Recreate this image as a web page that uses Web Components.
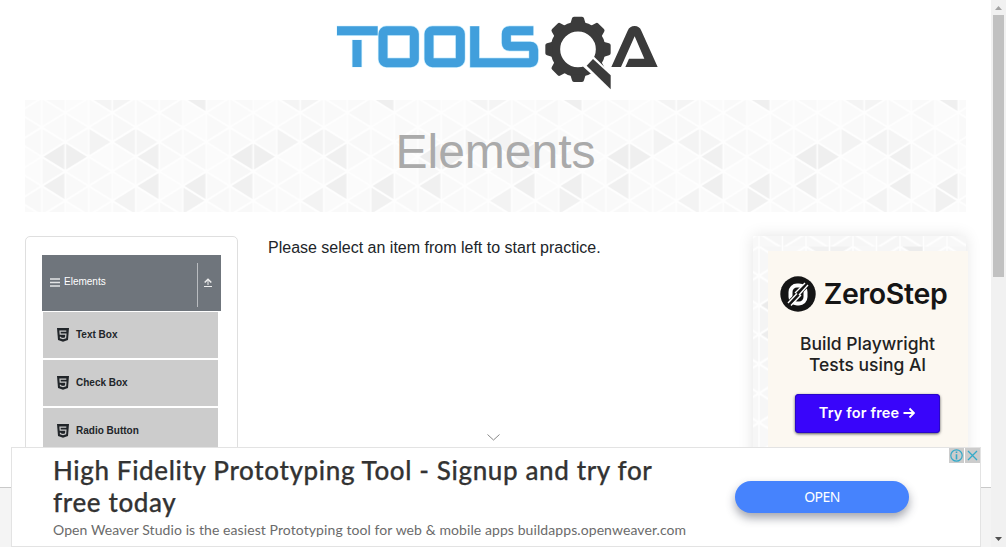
<!DOCTYPE html>
<html lang="en">
<head>
<meta charset="utf-8">
<title>Elements</title>
<style>
html,body{margin:0;height:547px;overflow:hidden;background:#fff}
body{font:16px/24px "Liberation Sans",Arial,sans-serif;color:#212529}
</style>
</head>
<body>
<demo-page></demo-page>
<script>
const define = (name, html, setup) => customElements.define(name, class extends HTMLElement {
  connectedCallback() {
    if (this.shadowRoot) return;
    const t = document.createElement('template');
    t.innerHTML = html;
    this.attachShadow({ mode: 'open' }).appendChild(t.content.cloneNode(true));
    if (setup) setup(this, this.shadowRoot);
  }
});

define('tri-pattern', `<style>:host{display:block;overflow:hidden}svg{display:block;width:100%;height:100%}</style>
<svg aria-hidden="true"><defs><pattern id="p" patternUnits="userSpaceOnUse" width="188" height="600"></pattern></defs><rect width="100%" height="100%" fill="url(#p)"/></svg>`,
(host, root) => {
  const p = root.querySelector('pattern');
  const dx = +host.getAttribute('dx') || 0, dy = +host.getAttribute('dy') || 0;
  const dim = +host.getAttribute('dim') || 0;
  p.setAttribute('patternTransform', `translate(${dx} ${dy})`);
  const w = 23.5, h = 29.35;
  const dark = { 'L0,0':238,'R1,0':239,'L4,0':240,'L0,1':240,'L4,1':239,'L6,1':239,'R6,1.5':241,'L3,1.5':243,
    'R2,-0.5':243,'L3,-0.5':243,'R4,-0.5':245,'L6,-2':239,'L2,-2':244,'R3,-2':244,'R0,0.5':247,'L5,-0.5':248 };
  const soft = [249,250,249,251,249,250,249,251,250,248,251];
  let s = '<rect width="188" height="600" fill="#fefefe"/>';
  for (let i = 0; i < 8; i++) for (let k = 0; k < 42; k++) {
    const y = (k / 2) * h, left = (i + k) % 2 === 0, x0 = i * w, x1 = x0 + w;
    const v = (dark[(left ? 'L' : 'R') + i + ',' + (k - 4) / 2] || soft[(i * 7 + k * 5 + (left ? 2 : 0)) % 11]) - dim;
    const pts = left ? `${x0+2},${y} ${x1-.8},${y-h/2+1.8} ${x1-.8},${y+h/2-1.8}` : `${x1-2},${y} ${x0+.8},${y-h/2+1.8} ${x0+.8},${y+h/2-1.8}`;
    s += `<polygon points="${pts}" fill="rgb(${v},${v},${v})"/>`;
  }
  p.innerHTML = s;
});

define('site-logo', `<style>:host{display:block;width:345px;height:95px}svg{display:block}</style>
<svg width="345" height="95" viewBox="0 0 1035 285" role="img" aria-label="ToolsQA">
<g fill="none" stroke="#ccefff" stroke-width="31"><path d="M35 77.500H159M96 104V187"/><rect x="174" y="77" width="94" height="96" rx="10"/><rect x="312" y="77" width="94" height="96" rx="10"/><path d="M449 63V173H616Q626 173 626 163V134Q626 124 616 124H554Q544 124 544 114V87Q544 77 554 77H626"/></g>
<g fill="none" stroke="#419fdc" stroke-width="27"><path d="M36 77.500H158M96 105V186"/><rect x="174" y="77" width="94" height="96" rx="10"/><rect x="312" y="77" width="94" height="96" rx="10"/><path d="M449 64V173H616Q626 173 626 163V134Q626 124 616 124H554Q544 124 544 114V87Q544 77 554 77H625"/></g>
<g id="gear" transform="translate(759 133)" fill="#3b3b3b"></g>
<path d="M781 184 805 160 857 211V253Z" fill="#fff" stroke="#fff" stroke-width="10"/>
<path d="M785 182 804 162 857 211V253Z" fill="#3b3b3b"/>
<path d="M859 186 908 77Q914 63 929 63 943 63 949 77L998 186H901L912 161H958L929 94 888 186Z" fill="#3b3b3b"/>
</svg>`, (h, r) => {
  let s = '<circle r="68" fill="none" stroke="#3b3b3b" stroke-width="29"/>';
  for (let i = 0; i < 8; i++) s += `<path transform="rotate(${i*45})" d="M-23-76-18-93Q-17-98-12-98H12Q17-98 18-93L23-76Z"/>`;
  r.querySelector('#gear').innerHTML = s;
});

define('page-banner', `<style>:host{display:grid;height:112px;overflow:hidden}tri-pattern,h1{grid-area:1/1}h1{margin:0;text-align:center;font-weight:400;font-size:48px;line-height:104px;color:#aaa;z-index:1}</style>
<tri-pattern dx="16.700" dy="-2"></tri-pattern><h1><slot></slot></h1>`);

define('menu-item', `<style>:host{display:flex;align-items:center;height:46px;margin-bottom:2px;background:#ccc;padding-left:14px;font-size:10px;font-weight:700;line-height:15px}svg{margin:0 7px 0 0}span{margin-bottom:1px}</style>
<svg width="12" height="14" viewBox="0 0 12 14"><path d="M0 0H12L11 12 6 13.700 1 12Z" fill="#212529"/><path d="M9.300 3.200H3L3.200 6.200H8.900L8.600 9.800 6 10.600 3.500 9.900 3.400 8.700" fill="none" stroke="#ccc" stroke-width="1.200"/></svg><span><slot></slot></span>`);

define('side-menu', `<style>:host{display:block;box-sizing:border-box;width:213px;height:320px;border:1px solid #dfdfdf;border-radius:5px;padding:18px 16px;background:#fff}
header{display:flex;align-items:center;height:56px;background:#6f757c;color:#fff;font-size:10px;line-height:15px;padding-left:8px;box-sizing:border-box}
header span{margin:-4px 0 0 4px;flex:1}.bars{margin-top:-2px}.up{width:23px;height:44px;border-left:1px solid #b9bcc0;display:flex;align-items:center;margin-top:4px}.up svg{margin:-5px 0 0 6px}
.items{width:175px;margin:1px 0 0 1px;color:#212529}</style>
<header><svg class="bars" width="10" height="9" viewBox="0 0 10 9"><path d="M0 1H10M0 4.500H10M0 8H10" stroke="#e4e5e6" stroke-width="1.700"/></svg><span><slot name="title"></slot></span><div class="up"><svg width="8" height="9" viewBox="0 0 8 9"><path d="M0 8.500H8M4 7V2" stroke="#eee" fill="none"/><path d="M.7 4.500 4 1.200 7.300 4.500" stroke="#eee" stroke-width="1.500" fill="none"/></svg></div></header>
<div class="items"><slot></slot></div>`);

define('zero-card', `<style>:host{display:block;position:relative;width:213px;height:300px;box-shadow:0 0 15px rgba(0,0,0,.11)}
tri-pattern{height:100%}
.card{position:absolute;left:15px;top:15px;width:200px;height:290px;padding-right:1px;box-sizing:border-box;background:#fcf8f1;color:#151515;font-family:Inter,sans-serif;text-align:center;display:flex;flex-direction:column;align-items:center}
.brand{display:flex;align-items:center;gap:8px;margin:25px 8px 0 0;height:36px;white-space:nowrap;font-size:28.500px;font-weight:600;letter-spacing:-.35px;line-height:36px}
p{margin:21px 0 0;font-size:17.500px;line-height:21px;font-weight:500;white-space:nowrap;color:#222}
.btn{margin:19px 1px 0 0;width:145px;height:39px;border-radius:4px;background:#3905fa;box-shadow:0 1px 3px #555,inset 0 0 0 1px #2807c9;color:#fff;font-weight:600;font-size:14.500px;letter-spacing:.15px;line-height:37px;display:flex;align-items:center;justify-content:center;gap:4px}
.btn *{position:relative;top:-1px}</style>
<tri-pattern dx="6" dy="10.500" dim="3"></tri-pattern>
<div class="card"><div class="brand"><svg width="36" height="36" viewBox="0 0 36 36"><circle cx="18" cy="18" r="17.700" fill="#151515"/><rect x="10.500" y="9.500" width="15" height="18" rx="6.500" fill="none" stroke="#fff" stroke-width="4"/><path d="M7.500 29 28.500 7" stroke="#151515" stroke-width="5"/><path d="M8 27 17 17.500M11 29.500 21 19M15 17 25 7M19 19 28 9" stroke="#fff" stroke-width="1.400"/></svg><span>ZeroStep</span></div>
<p>Build Playwright<br>Tests using AI</p><div class="btn"><span>Try for free</span><svg width="12" height="12" viewBox="0 0 12 12"><path d="M.5 6H11M6.500 1.500 11 6 6.500 10.500" fill="none" stroke="#fff" stroke-width="1.800"/></svg></div></div>`);

define('bottom-ad', `<style>:host{display:block;position:absolute;left:11px;bottom:0;width:970px;height:100px;box-sizing:border-box;border:1px solid #e3e3e3;background:#fff}
.row{display:flex;align-items:center;height:98px;font-family:Lato,sans-serif}
.copy{margin-left:41px;width:682px;white-space:nowrap}
h2{margin:0;font-size:26px;line-height:32px;font-weight:500;color:#333;letter-spacing:.63px;-webkit-text-stroke:.25px #333}
p{margin:1px 0 0;font-size:14px;line-height:22px;color:#6b6b6b;letter-spacing:.085px}
.open{width:174px;height:32px;border-radius:16px;background:#4683fd;color:#fff;text-align:center;font:14px/31px "Noto Sans",sans-serif;letter-spacing:-.6px;box-shadow:0 5px 10px rgba(50,55,75,.45)}
.tools{position:absolute;right:0;top:0;display:flex;gap:1px}.tools svg{background:#ccc}
.chev{position:absolute;left:475px;top:-15px}</style>
<svg class="chev" width="13" height="9" viewBox="0 0 13 9"><path d="M.5 1.500 6.500 7 12.500 1.500" fill="none" stroke="#888"/></svg>
<div class="row"><div class="copy"><h2><slot name="title"></slot></h2><p><slot name="text"></slot></p></div><div class="open">OPEN</div></div>
<div class="tools"><svg width="15" height="15" viewBox="0 0 15 15"><circle cx="7.500" cy="7.500" r="5.700" fill="none" stroke="#35aac9" stroke-width="1.200"/><path d="M7.500 3.500V5M7.500 6.200V11.500" stroke="#35aac9" stroke-width="1.600"/></svg><svg width="15" height="15" viewBox="0 0 15 15"><path d="M3 3 12 12M12 3 3 12" stroke="#35aac9" stroke-width="1.300"/></svg></div>`);

define('scroll-bar', `<style>:host{display:flex;flex-direction:column;align-items:center;width:15px;height:547px;background:#f1f1f1}
.thumb{width:11px;height:262px;background:#c1c1c1;margin-top:1px}svg{display:block}.down{margin-top:auto}</style>
<svg width="15" height="14" viewBox="0 0 15 14"><path d="M4 10 7.500 6 11 10Z" fill="#a3a3a3"/></svg><div class="thumb"></div><svg class="down" width="15" height="15" viewBox="0 0 15 15"><path d="M4 5 7.500 9 11 5Z" fill="#505050"/></svg>`);

define('demo-page', `<style>:host{display:flex;position:relative;width:1006px;height:547px;overflow:hidden}
main{flex:1;height:547px;display:flex;flex-direction:column}
.body{height:487px;overflow:hidden;padding:0 25px;box-sizing:border-box}
site-logo{margin:5px 0 0 300px}
.cols{display:flex;margin-top:24px}.msg{margin-left:30px;width:485px}
footer{flex:1;border-top:1px solid #c9c9c9;background:#f4f4f4}</style>
<main><div class="body"><site-logo></site-logo><page-banner>Elements</page-banner>
<div class="cols"><side-menu><span slot="title">Elements</span><menu-item>Text Box</menu-item><menu-item>Check Box</menu-item><menu-item>Radio Button</menu-item></side-menu>
<div class="msg">Please select an item from left to start practice.</div><zero-card></zero-card></div></div><footer></footer></main>
<scroll-bar></scroll-bar>
<bottom-ad><span slot="title">High Fidelity Prototyping Tool - Signup and try for<br>free today</span><span slot="text">Open Weaver Studio is the easiest Prototyping tool for web &amp; mobile apps buildapps.openweaver.com</span></bottom-ad>`);
</script>
</body>
</html>
